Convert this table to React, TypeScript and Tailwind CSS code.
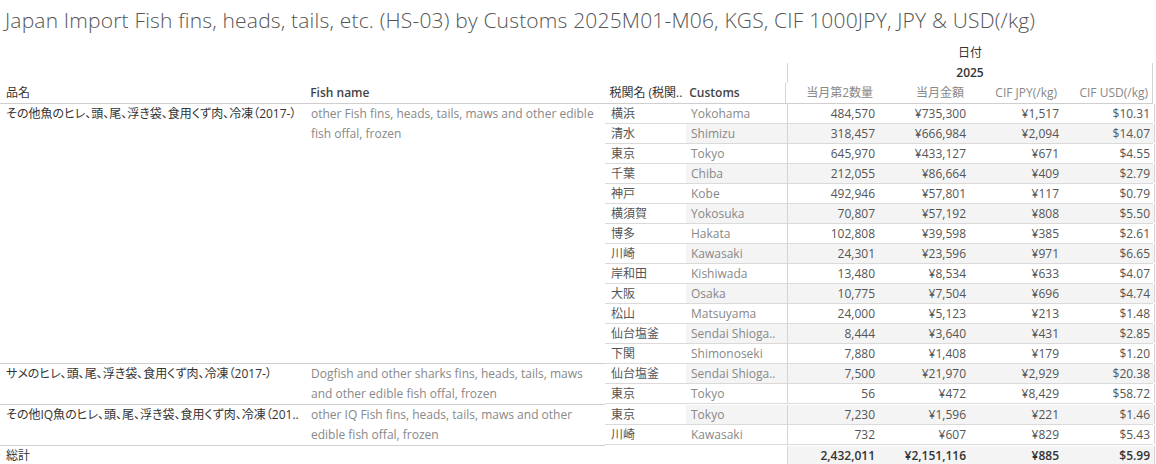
import React from 'react';

type Row = { jp: string; en: string; qty: string; amt: string; jpy: string; usd: string };
type Group = { name: string; fish: string; rows: Row[] };

const groups: Group[] = [
  {
    name: 'その他魚のヒレ、頭、尾、浮き袋、食用くず肉、冷凍（2017-）',
    fish: 'other Fish fins, heads, tails, maws and other edible fish offal, frozen',
    rows: [
      { jp: '横浜', en: 'Yokohama', qty: '484,570', amt: '¥735,300', jpy: '¥1,517', usd: '$10.31' },
      { jp: '清水', en: 'Shimizu', qty: '318,457', amt: '¥666,984', jpy: '¥2,094', usd: '$14.07' },
      { jp: '東京', en: 'Tokyo', qty: '645,970', amt: '¥433,127', jpy: '¥671', usd: '$4.55' },
      { jp: '千葉', en: 'Chiba', qty: '212,055', amt: '¥86,664', jpy: '¥409', usd: '$2.79' },
      { jp: '神戸', en: 'Kobe', qty: '492,946', amt: '¥57,801', jpy: '¥117', usd: '$0.79' },
      { jp: '横須賀', en: 'Yokosuka', qty: '70,807', amt: '¥57,192', jpy: '¥808', usd: '$5.50' },
      { jp: '博多', en: 'Hakata', qty: '102,808', amt: '¥39,598', jpy: '¥385', usd: '$2.61' },
      { jp: '川崎', en: 'Kawasaki', qty: '24,301', amt: '¥23,596', jpy: '¥971', usd: '$6.65' },
      { jp: '岸和田', en: 'Kishiwada', qty: '13,480', amt: '¥8,534', jpy: '¥633', usd: '$4.07' },
      { jp: '大阪', en: 'Osaka', qty: '10,775', amt: '¥7,504', jpy: '¥696', usd: '$4.74' },
      { jp: '松山', en: 'Matsuyama', qty: '24,000', amt: '¥5,123', jpy: '¥213', usd: '$1.48' },
      { jp: '仙台塩釜', en: 'Sendai Shioga..', qty: '8,444', amt: '¥3,640', jpy: '¥431', usd: '$2.85' },
      { jp: '下関', en: 'Shimonoseki', qty: '7,880', amt: '¥1,408', jpy: '¥179', usd: '$1.20' },
    ],
  },
  {
    name: 'サメのヒレ、頭、尾、浮き袋、食用くず肉、冷凍（2017-）',
    fish: 'Dogfish and other sharks fins, heads, tails, maws and other edible fish offal, frozen',
    rows: [
      { jp: '仙台塩釜', en: 'Sendai Shioga..', qty: '7,500', amt: '¥21,970', jpy: '¥2,929', usd: '$20.38' },
      { jp: '東京', en: 'Tokyo', qty: '56', amt: '¥472', jpy: '¥8,429', usd: '$58.72' },
    ],
  },
  {
    name: 'その他IQ魚のヒレ、頭、尾、浮き袋、食用くず肉、冷凍（201..',
    fish: 'other IQ Fish fins, heads, tails, maws and other edible fish offal, frozen',
    rows: [
      { jp: '東京', en: 'Tokyo', qty: '7,230', amt: '¥1,596', jpy: '¥221', usd: '$1.46' },
      { jp: '川崎', en: 'Kawasaki', qty: '732', amt: '¥607', jpy: '¥829', usd: '$5.43' },
    ],
  },
];

const font = { fontFamily: '"Open Sans", "Noto Sans CJK JP", sans-serif' };

// four measure columns, right aligned
function Nums({ v }: { v: string[] }) {
  return (
    <>
      <div className="w-[91px] shrink-0 flex justify-end pr-[4px]">{v[0]}</div>
      <div className="w-[90px] shrink-0 flex justify-end pr-[3px]">{v[1]}</div>
      <div className="w-[94px] shrink-0 flex justify-end pr-[4px]">{v[2]}</div>
      <div className="w-[91px] shrink-0 flex justify-end pr-[4px]">{v[3]}</div>
    </>
  );
}

export default function App() {
  let idx = 0;
  return (
    <div
      className="w-[1156px] h-[464px] overflow-hidden bg-white text-[12px] leading-[20px] [font-feature-settings:'palt']"
      style={font}
    >
      <div className="h-[43px] pl-[5px] pt-[6px] text-[21px] leading-[28px] tracking-[0.18px] font-light text-[#555] whitespace-nowrap">
        Japan Import Fish fins, heads, tails, etc. (HS-03) by Customs 2025M01-M06, KGS, CIF 1000JPY, JPY &amp; USD(/kg)
      </div>

      {/* column headers */}
      <div className="w-[1153px]">
        <div className="flex h-[20px]">
          <div className="w-[787px]" />
          <div className="w-[366px] text-center text-[#333]">日付</div>
        </div>
        <div className="flex h-[20px]">
          <div className="w-[787px]" />
          <div className="w-[366px] text-center text-[#333] font-semibold border-l border-r border-[#d4d4d4]">2025</div>
        </div>
        <div className="flex h-[21px] border-b border-[#cfcfcf] whitespace-nowrap">
          <div className="w-[305px] pl-[6px] text-[#333]">品名</div>
          <div className="w-[300px] pl-[6px] font-semibold text-[#444]">Fish name</div>
          <div className="w-[81px] pl-[6px] text-[#333] overflow-hidden">税関名 (税関..</div>
          <div className="w-[101px] pl-[5px] font-semibold text-[#444]">Customs</div>
          <div className="flex border-l border-r border-[#d4d4d4] text-[#888]">
            <Nums v={['当月第2数量', '当月金額', 'CIF JPY(/kg)', 'CIF USD(/kg)']} />
          </div>
        </div>

        {/* body */}
        {groups.map((g) => (
          <div key={g.name} className="flex">
            <div className="w-[305px] shrink-0 pl-[6px] pr-[2px] text-[#333] border-b border-[#cfcfcf] whitespace-nowrap overflow-hidden">
              {g.name}
            </div>
            <div className="w-[300px] shrink-0 pl-[6px] pr-[4px] leading-[20px] text-[#888] border-b border-[#cfcfcf]">
              {g.fish}
            </div>
            <div className="w-[548px] shrink-0">
              {g.rows.map((r) => {
                const band = idx++ % 2 === 1;
                return (
                  <div key={r.jp + r.en + r.qty} className="flex h-[20px] border-b border-[#dadada] whitespace-nowrap">
                    <div className="w-[81px] shrink-0 pl-[6px] text-[#555]">{r.jp}</div>
                    <div className={`w-[101px] shrink-0 pl-[5px] text-[#888] ${band ? 'bg-[#f4f4f4]' : ''}`}>{r.en}</div>
                    <div className={`flex border-l border-r border-[#d4d4d4] text-[#555] ${band ? 'bg-[#f4f4f4]' : ''}`}>
                      <Nums v={[r.qty, r.amt, r.jpy, r.usd]} />
                    </div>
                  </div>
                );
              })}
            </div>
          </div>
        ))}

        {/* total */}
        <div className="flex h-[20px] border-b border-[#cfcfcf] whitespace-nowrap">
          <div className="w-[787px] shrink-0 pl-[6px] text-[#333]">総計</div>
          <div className="flex border-l border-r border-[#d4d4d4] bg-[#f4f4f4] text-[#333] font-semibold">
            <Nums v={['2,432,011', '¥2,151,116', '¥885', '$5.99']} />
          </div>
        </div>
      </div>
    </div>
  );
}
